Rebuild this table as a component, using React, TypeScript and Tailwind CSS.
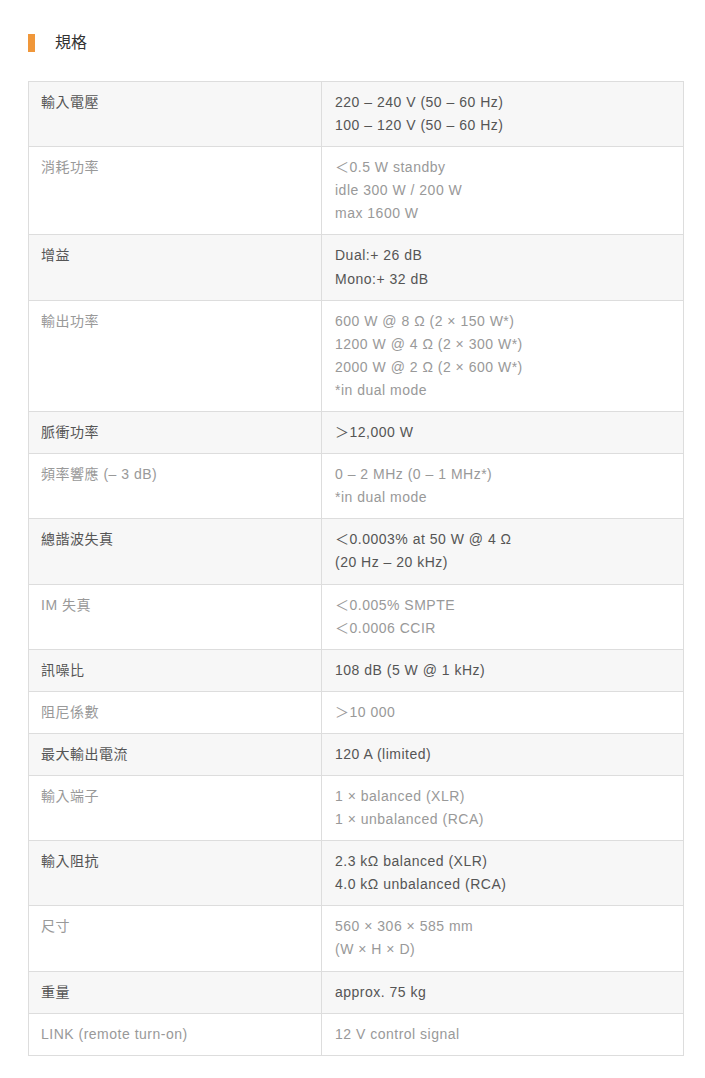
import React from "react";

const rows: [string, string[]][] = [
  ["輸入電壓", ["220 – 240 V (50 – 60 Hz)", "100 – 120 V (50 – 60 Hz)"]],
  ["消耗功率", ["＜0.5 W standby", "idle 300 W / 200 W", "max 1600 W"]],
  ["增益", ["Dual:+ 26 dB", "Mono:+ 32 dB"]],
  ["輸出功率", ["600 W @ 8 Ω (2 × 150 W*)", "1200 W @ 4 Ω (2 × 300 W*)", "2000 W @ 2 Ω (2 × 600 W*)", "*in dual mode"]],
  ["脈衝功率", ["＞12,000 W"]],
  ["頻率響應 (– 3 dB)", ["0 – 2 MHz (0 – 1 MHz*)", "*in dual mode"]],
  ["總諧波失真", ["＜0.0003% at 50 W @ 4 Ω", "(20 Hz – 20 kHz)"]],
  ["IM 失真", ["＜0.005% SMPTE", "＜0.0006 CCIR"]],
  ["訊噪比", ["108 dB (5 W @ 1 kHz)"]],
  ["阻尼係數", ["＞10 000"]],
  ["最大輸出電流", ["120 A (limited)"]],
  ["輸入端子", ["1 × balanced (XLR)", "1 × unbalanced (RCA)"]],
  ["輸入阻抗", ["2.3 kΩ balanced (XLR)", "4.0 kΩ unbalanced (RCA)"]],
  ["尺寸", ["560 × 306 × 585 mm", "(W × H × D)"]],
  ["重量", ["approx. 75 kg"]],
  ["LINK (remote turn-on)", ["12 V control signal"]],
];

export default function App() {
  return (
    <div
      className="w-[705px] min-h-[1078px] bg-white pt-[34px]"
      style={{ fontFamily: '"Liberation Sans", "Noto Sans CJK TC", sans-serif' }}
    >
      <div className="pl-[28px] flex items-center h-[18px]">
        <div className="w-[7px] h-[18px] bg-[#f0973a]" />
        <div className="ml-[20px] text-[16px] leading-[18px] text-[#333]">規格</div>
      </div>
      <div className="mt-[29px] ml-[28px] w-[656px] border border-[#ddd] border-b-0">
        {rows.map(([k, v], i) => {
          const shaded = i % 2 === 0;
          const color = shaded ? "text-[#555]" : "text-[#999]";
          return (
            <div
              key={i}
              className={`flex border-b border-[#ddd] ${shaded ? "bg-[#f7f7f7]" : "bg-white"}`}
            >
              <div
                className={`w-[293px] shrink-0 border-r border-[#ddd] pl-[12px] pt-[9px] pb-[9px] text-[14px] leading-[23.1px] tracking-[0.5px] ${color}`}
              >
                {k}
              </div>
              <div
                className={`flex-1 pl-[13px] pt-[9px] pb-[9px] text-[14px] leading-[23.1px] tracking-[0.5px] ${color}`}
              >
                {v.map((l, j) => (
                  <div key={j}>{l}</div>
                ))}
              </div>
            </div>
          );
        })}
      </div>
    </div>
  );
}
